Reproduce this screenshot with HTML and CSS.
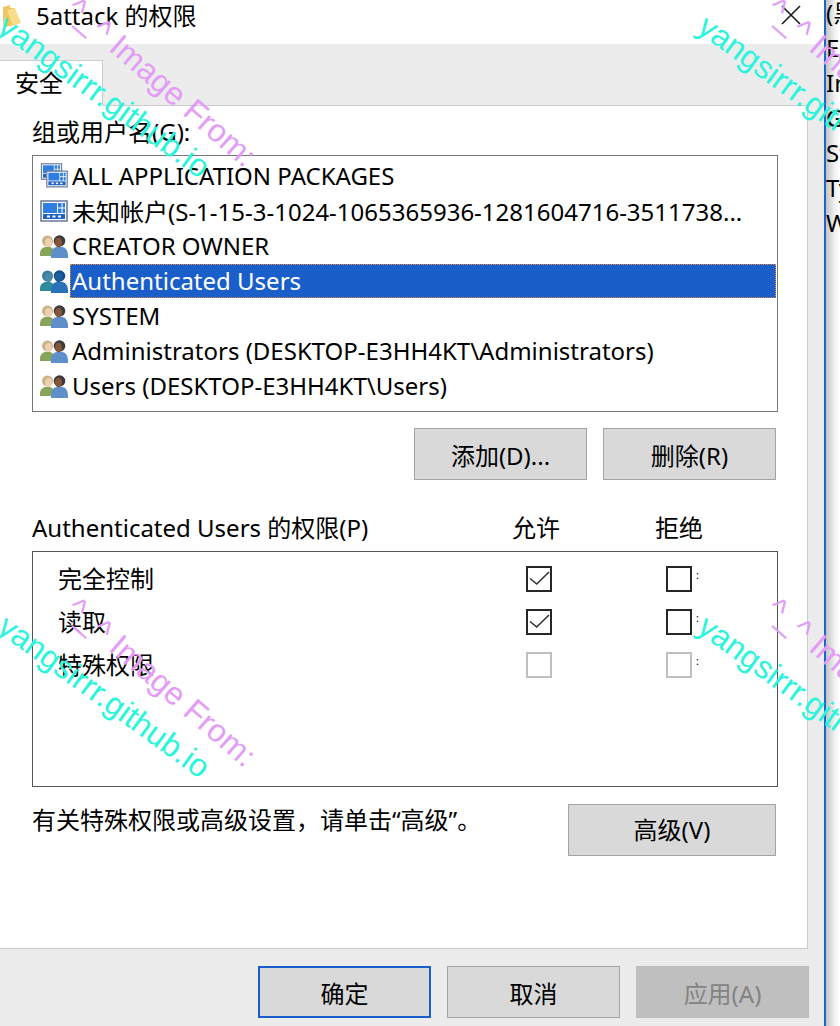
FILE: index.html
```html
<!DOCTYPE html>
<html lang="en">
<head>
  <meta charset="UTF-8">
  <title>5attack 的权限</title>
  <link rel="stylesheet" href="styles.css">
</head>
<body>
  <svg class="defs" width="0" height="0">
    <symbol id="win" viewBox="0 0 28 22">
      <rect x="1" y="1" width="26" height="20" fill="#fff" stroke="#6f7f9c" stroke-width="1.6"/>
      <rect x="3" y="3" width="14" height="10" fill="#2f7de0"/>
      <rect x="18" y="3" width="3.5" height="4.5" fill="#2f7de0"/>
      <rect x="22.5" y="3" width="2.5" height="4.5" fill="#2f7de0"/>
      <rect x="18" y="8.5" width="3.5" height="4.5" fill="#2f7de0"/>
      <rect x="22.5" y="8.5" width="2.5" height="4.5" fill="#2f7de0"/>
      <rect x="3" y="14" width="22" height="5" fill="#1f63c4"/>
      <rect x="7" y="15.5" width="3" height="2" fill="#fff"/>
      <rect x="12.5" y="15.5" width="3" height="2" fill="#fff"/>
      <rect x="18" y="15.5" width="3" height="2" fill="#fff"/>
    </symbol>
    <symbol id="users" viewBox="0 0 28 24">
      <path d="M0 20c0-5 3-7 6-7h3c3 0 5 2 5 6l-1 3H0z" fill="#86a558"/>
      <circle cx="7.5" cy="7" r="5.5" fill="#c9b488"/>
      <ellipse cx="8.5" cy="8.5" rx="3.5" ry="4.5" fill="#edd0b0"/>
      <path d="M11 22c0-6 3-9 6-9h5c3 0 6 3 6 9v2H11z" fill="#5f8fca"/>
      <circle cx="19.5" cy="7" r="5.8" fill="#3c3a3a"/>
      <ellipse cx="18.5" cy="8.5" rx="3.6" ry="4.8" fill="#84573a"/>
    </symbol>
    <symbol id="users-sel" viewBox="0 0 28 24">
      <path d="M0 20c0-5 3-7 6-7h3c3 0 5 2 5 6l-1 3H0z" fill="#2f8a9c"/>
      <circle cx="7.5" cy="7" r="5.5" fill="#3a7f9a"/>
      <ellipse cx="8.5" cy="8.5" rx="3.5" ry="4.5" fill="#4a8aa8"/>
      <path d="M11 22c0-6 3-9 6-9h5c3 0 6 3 6 9v2H11z" fill="#2a72b8"/>
      <circle cx="19.5" cy="7" r="5.8" fill="#164f8c"/>
      <ellipse cx="18.5" cy="8.5" rx="3.6" ry="4.8" fill="#1c5fa0"/>
    </symbol>
  </svg>

  <div class="dialog">
    <div class="titlebar">
      <svg class="folder" width="18" height="23" viewBox="0 0 18 23">
        <path d="M0 2 L7 0 L7 3 L12 3 L12 20 L0 22z" fill="#f0c75e"/>
        <path d="M4 5 L12 3 L18 18 L10 21z" fill="#f7dc8a"/>
      </svg>
      <span class="title-text">5attack 的权限</span>
      <svg class="close" width="20" height="20" viewBox="0 0 20 20">
        <path d="M1 1 L19 19 M19 1 L1 19" stroke="#1a1a1a" stroke-width="1.6" fill="none"/>
      </svg>
    </div>
    <div class="tabstrip">
      <div class="tab">安全</div>
    </div>
    <div class="panel">
      <div class="label">组或用户名(G):</div>
      <div class="list">
        <div class="row">
          <span class="icon-pair">
            <svg class="win-back" width="23" height="17"><use href="#win"/></svg>
            <svg class="win-front" width="22" height="18"><use href="#win"/></svg>
          </span>
          <span>ALL APPLICATION PACKAGES</span>
        </div>
        <div class="row">
          <svg class="icon" width="28" height="22"><use href="#win"/></svg>
          <span>未知帐户(S-1-15-3-1024-1065365936-1281604716-3511738...</span>
        </div>
        <div class="row">
          <svg class="icon" width="28" height="24"><use href="#users"/></svg>
          <span>CREATOR OWNER</span>
        </div>
        <div class="row">
          <svg class="icon" width="28" height="24"><use href="#users-sel"/></svg>
          <span class="selected">Authenticated Users</span>
        </div>
        <div class="row">
          <svg class="icon" width="28" height="24"><use href="#users"/></svg>
          <span>SYSTEM</span>
        </div>
        <div class="row">
          <svg class="icon" width="28" height="24"><use href="#users"/></svg>
          <span>Administrators (DESKTOP-E3HH4KT\Administrators)</span>
        </div>
        <div class="row">
          <svg class="icon" width="28" height="24"><use href="#users"/></svg>
          <span>Users (DESKTOP-E3HH4KT\Users)</span>
        </div>
      </div>
      <div class="list-actions">
        <button class="btn">添加(D)...</button>
        <button class="btn">删除(R)</button>
      </div>
      <div class="perm-head">
        <span>Authenticated Users 的权限(P)</span>
        <span>允许</span>
        <span>拒绝</span>
      </div>
      <div class="perm-box">
        <div class="perm-row">
          <span>完全控制</span>
          <span class="check">
            <svg width="22" height="22" viewBox="0 0 22 22"><path d="M2 10.5 L8.7 16 L21 4" stroke="#333" stroke-width="1.6" fill="none"/></svg>
          </span>
          <span class="check-cell"><span class="check"></span><span class="dots">:</span></span>
        </div>
        <div class="perm-row">
          <span>读取</span>
          <span class="check">
            <svg width="22" height="22" viewBox="0 0 22 22"><path d="M2 10.5 L8.7 16 L21 4" stroke="#333" stroke-width="1.6" fill="none"/></svg>
          </span>
          <span class="check-cell"><span class="check"></span><span class="dots">:</span></span>
        </div>
        <div class="perm-row">
          <span>特殊权限</span>
          <span class="check off"></span>
          <span class="check-cell"><span class="check off"></span><span class="dots">:</span></span>
        </div>
      </div>
      <div class="advanced">
        <span>有关特殊权限或高级设置，请单击“高级”。</span>
        <button class="btn btn-wide">高级(V)</button>
      </div>
    </div>
    <div class="footer">
      <button class="btn btn-default">确定</button>
      <button class="btn">取消</button>
      <button class="btn btn-disabled">应用(A)</button>
    </div>
  </div>

  <div class="behind">
    <div>(黑</div>
    <div>En</div>
    <div>In</div>
    <div>Gr</div>
    <div>St</div>
    <div>Ty</div>
    <div>W</div>
  </div>

  <div class="wm wm-a"><span class="wm-purple">^_^ Image From:</span><span class="wm-cyan">yangsirrr.github.io</span></div>
  <div class="wm wm-b"><span class="wm-purple">^_^ Image From:</span><span class="wm-cyan">yangsirrr.github.io</span></div>
  <div class="wm wm-c"><span class="wm-purple">^_^ Image From:</span><span class="wm-cyan">yangsirrr.github.io</span></div>
  <div class="wm wm-d"><span class="wm-purple">^_^ Image From:</span><span class="wm-cyan">yangsirrr.github.io</span></div>
</body>
</html>
```

FILE: styles.css
```css
html, body {
  margin: 0;
  padding: 0;
}
body {
  width: 840px;
  height: 1026px;
  overflow: hidden;
  display: flex;
  position: relative;
  font-family: "Noto Sans", "Noto Sans CJK SC", sans-serif;
  font-size: 24px;
  color: #000;
  background: #fff;
}
.defs {
  position: absolute;
}
.dialog {
  width: 824px;
  flex: none;
  background: #ececec;
  display: flex;
  flex-direction: column;
}
.titlebar {
  height: 44px;
  background: #fff;
  display: flex;
  align-items: center;
  padding: 0 23px 0 3px;
  box-sizing: border-box;
}
.folder {
  margin: -12px 15px 0 0;
}
.title-text {
  flex: 1;
  line-height: 32px;
  margin-top: -12px;
}
.close {
  margin-top: -14px;
}
.tabstrip {
  height: 62px;
  box-sizing: border-box;
  width: 808px;
  padding-top: 16px;
  border-bottom: 1px solid #ccc;
}
.tab {
  width: 103px;
  height: 46px;
  box-sizing: border-box;
  padding-left: 15px;
  line-height: 44px;
  background: #fff;
  border: 1px solid #ccc;
  border-left: none;
  border-bottom: none;
}
.panel {
  width: 808px;
  height: 843px;
  flex: none;
  box-sizing: border-box;
  background: #fff;
  border-right: 1px solid #ccc;
  border-bottom: 1px solid #ccc;
  padding: 9px 29px 0 32px;
}
.label {
  height: 34px;
  line-height: 34px;
  margin-bottom: 6px;
}
.list {
  height: 257px;
  box-sizing: border-box;
  border: 1px solid #777;
  padding-top: 2px;
}
.row {
  height: 35px;
  display: flex;
  align-items: center;
  white-space: nowrap;
  padding-left: 7px;
}
.icon {
  flex: none;
  margin-right: 4px;
}
.icon-pair {
  flex: none;
  width: 28px;
  height: 26px;
  margin-right: 4px;
  position: relative;
}
.win-back {
  position: absolute;
  left: 0;
  top: 0;
}
.win-front {
  position: absolute;
  left: 6px;
  top: 7px;
}
.selected {
  flex: 1;
  margin: 0 1px 0 -2px;
  padding-left: 2px;
  height: 34px;
  line-height: 34px;
  box-sizing: border-box;
  color: #fff;
  background: #1a5fc9;
  outline: 1px dotted #e8893a;
  outline-offset: -1px;
}
.list-actions {
  display: flex;
  justify-content: flex-end;
  gap: 16px;
  margin-top: 16px;
  padding-right: 2px;
}
.btn {
  width: 173px;
  height: 52px;
  flex: none;
  box-sizing: border-box;
  padding: 0;
  background: #d9d9d9;
  border: 1px solid #a3a3a3;
  font: inherit;
  color: #000;
}
.btn-wide {
  width: 208px;
}
.btn-default {
  border: 2px solid #1a5fc9;
}
.btn-disabled {
  background: #bfbfbf;
  border-color: #bdbdbd;
  color: #838383;
}
.perm-head {
  display: grid;
  grid-template-columns: 480px 143px 1fr;
  height: 34px;
  line-height: 34px;
  margin-top: 31px;
  margin-bottom: 6px;
}
.perm-box {
  height: 236px;
  box-sizing: border-box;
  border: 1px solid #555;
  padding: 14px 0 0 25px;
}
.perm-row {
  display: grid;
  grid-template-columns: 468px 140px 1fr;
  height: 43px;
  align-items: start;
}
.perm-row > span:first-child {
  line-height: 26px;
}
.check {
  display: block;
  width: 26px;
  height: 26px;
  box-sizing: border-box;
  border: 2px solid #262626;
  background: #fff;
}
.check svg {
  display: block;
}
.check.off {
  border-color: #bfbfbf;
}
.check-cell {
  display: flex;
}
.dots {
  font-size: 11px;
  line-height: 18px;
  margin-left: 4px;
}
.advanced {
  display: flex;
  justify-content: space-between;
  margin-top: 17px;
  padding-right: 2px;
  line-height: 32px;
}
.footer {
  display: flex;
  justify-content: flex-end;
  gap: 16px;
  padding: 17px 15px 0 0;
}
.behind {
  flex: 1;
  border-left: 2px solid #1a66cc;
  margin-top: 0;
  padding: 0 0 0 0;
  line-height: 35px;
  white-space: nowrap;
  overflow: hidden;
  background: linear-gradient(to right, #c4c4c4, #f2f2f2 9px, #fff 14px);
}
.behind div:first-child {
  margin-top: -5px;
}
.wm {
  position: absolute;
  width: 0;
  height: 0;
}
.wm-a { left: 0; top: 0; }
.wm-b { left: 700px; top: 0; }
.wm-c { left: 0; top: 600px; }
.wm-d { left: 700px; top: 600px; }
.wm span {
  position: absolute;
  white-space: nowrap;
  font-family: "Liberation Sans", sans-serif;
  font-size: 32px;
  line-height: 36px;
  transform-origin: 0 50%;
}
.wm-cyan {
  left: 2px;
  top: 4px;
  color: #2af5dc;
  transform: rotate(36deg);
}
.wm-purple {
  left: 72px;
  top: -14px;
  color: #e39cf7;
  transform: rotate(41deg);
}
```
